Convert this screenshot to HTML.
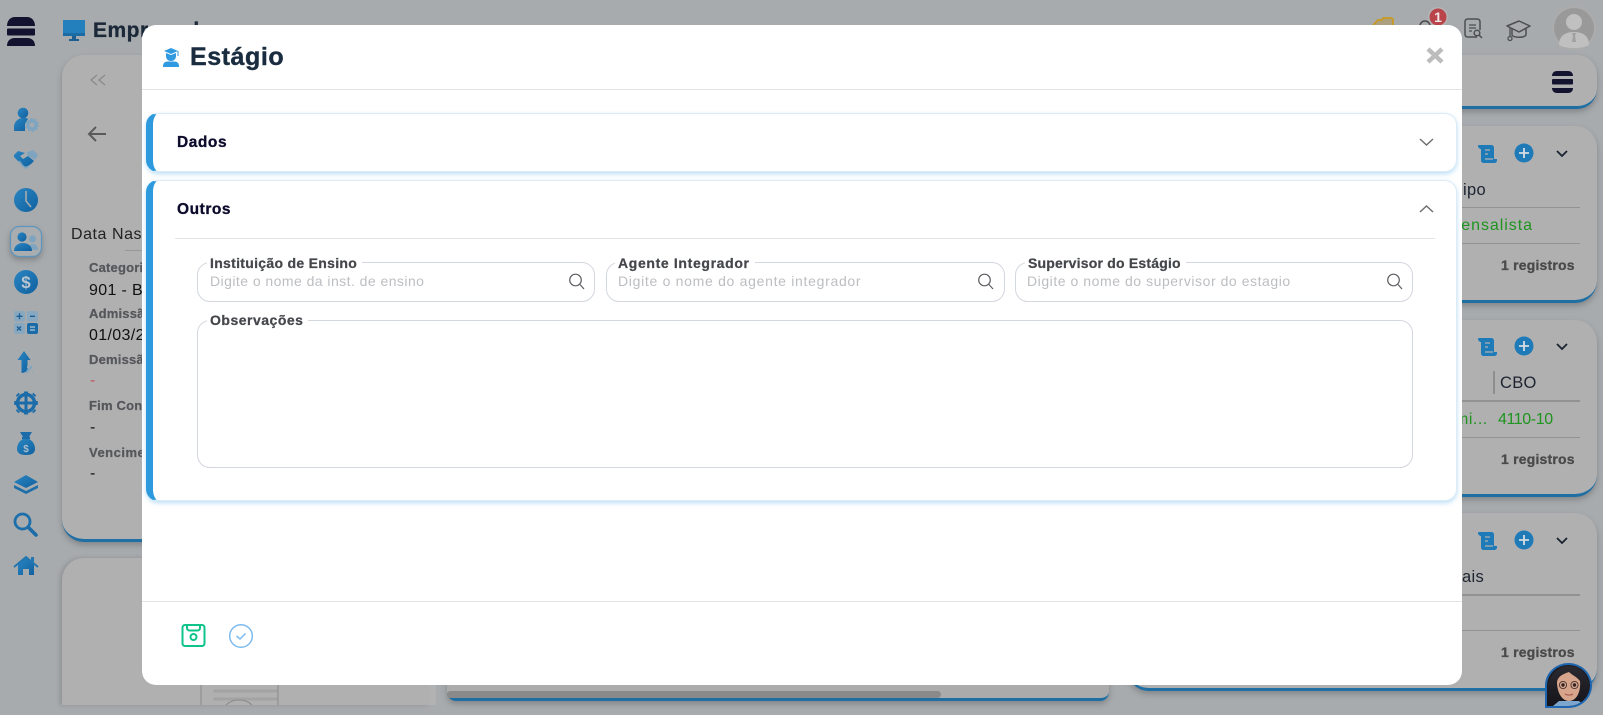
<!DOCTYPE html>
<html lang="pt-BR">
<head>
<meta charset="utf-8">
<title>Estágio</title>
<style>
*{box-sizing:border-box;margin:0;padding:0}
html,body{width:1603px;height:715px;overflow:hidden;background:#a7abae;font-family:"Liberation Sans",sans-serif}
.abs,.t{position:absolute}
.t{white-space:nowrap;line-height:1}
.card{position:absolute;background:#b0b0b0;border-radius:22px;box-shadow:0 3px 6px rgba(70,70,70,.35)}
.blue{border-bottom:3px solid #1f6fa5}
.lab{font-size:13px;font-weight:bold;color:#55575b;letter-spacing:.2px;-webkit-text-stroke:.25px #55575b}
.val{font-size:16px;color:#111;letter-spacing:.35px}
.reg{font-size:14px;font-weight:bold;color:#4a4a4a;letter-spacing:.2px;-webkit-text-stroke:.3px #4a4a4a}
.hd{font-size:16.5px;color:#1d2430;letter-spacing:.3px}
.gr{font-size:16px;color:#1f941f;letter-spacing:.5px}
.ln{position:absolute;height:1px;background:#929292}
svg{position:absolute;left:0;top:0;overflow:visible}
#modal{position:absolute;left:142px;top:25px;width:1320px;height:660px;background:#fff;border-radius:14px;overflow:hidden}
.acc{position:absolute;left:4px;width:1311px;background:#fff;border:1px solid #dcecf7;border-left:7px solid #2e9ade;border-radius:12px;box-shadow:0 2px 5px rgba(60,160,230,.35)}
.acc b{position:absolute;left:24px;font-size:15.5px;color:#0d0b2b;letter-spacing:.55px;line-height:1;-webkit-text-stroke:.3px #0d0b2b}
.fld{position:absolute;border:1px solid #d3d7de;border-radius:13px;background:#fff}
.fl{position:absolute;background:#fff;padding:0 5px 0 3px;font-size:14px;font-weight:bold;color:#45474b;line-height:1;white-space:nowrap;letter-spacing:.3px;-webkit-text-stroke:.25px #45474b}
.ph{position:absolute;font-size:14px;color:#bcbec2;line-height:1;white-space:nowrap;letter-spacing:.45px}
</style>
</head>
<body>

<!-- Page behind overlay -->
<div class="card blue" style="left:62px;top:55px;width:500px;height:487px"></div>
<div class="card" style="left:62px;top:558px;width:368px;height:147px;border-radius:22px 0 0 0;box-shadow:-2px 0 4px rgba(70,70,70,.25)"></div>
<div class="abs" style="left:430px;top:685px;width:6px;height:20px;background:#b2b2b2"></div>
<div class="card" style="left:447px;top:600px;width:662px;height:101px;background:#ababab;border-bottom:3px solid #1f6fa5;border-radius:0 0 9px 9px"></div>
<div class="abs" style="left:447px;top:691px;width:494px;height:7px;background:#8a8a8a;border-radius:4px"></div>
<div class="card blue" style="left:1400px;top:55px;width:197px;height:54px;border-radius:0 20px 20px 0"></div>
<div class="card blue" style="left:1400px;top:126px;width:197px;height:177px"></div>
<div class="card blue" style="left:1400px;top:320px;width:197px;height:177px"></div>
<div class="card blue" style="left:1127px;top:513px;width:470px;height:178px"></div>

<!-- header text -->
<div class="t" style="left:93px;top:20px;font-size:21px;font-weight:bold;color:#1b2838;letter-spacing:.5px;-webkit-text-stroke:.3px #1b2838">Empregados</div>

<!-- left card contents -->
<div class="t" style="left:71px;top:227px;font-size:16px;color:#222;letter-spacing:.55px">Data Nascimento</div>
<div class="ln" style="left:125px;top:250px;width:30px;background:#979797"></div>
<div class="t lab" style="left:89px;top:261px">Categoria</div>
<div class="t val" style="left:89px;top:283px">901 - Bolsista</div>
<div class="t lab" style="left:89px;top:307px">Admissão</div>
<div class="t val" style="left:89px;top:328px">01/03/2024</div>
<div class="t lab" style="left:89px;top:353px">Demissão</div>
<div class="t val" style="left:90px;top:373px;color:#c0535c">-</div>
<div class="t lab" style="left:89px;top:399px">Fim Contrato</div>
<div class="t val" style="left:90px;top:420px">-</div>
<div class="t lab" style="left:89px;top:446px;letter-spacing:.5px">Vencimento</div>
<div class="t val" style="left:90px;top:466px">-</div>

<!-- right cards contents -->
<div class="t hd" style="left:1463px;top:182px">ipo</div>
<div class="ln" style="left:1462px;top:207px;width:118px"></div>
<div class="t gr" style="left:1447px;top:218px;letter-spacing:.95px">Mensalista</div>
<div class="ln" style="left:1462px;top:243px;width:118px"></div>
<div class="t reg" style="left:1501px;top:258px">1 registros</div>

<div class="abs" style="left:1493px;top:371px;width:2px;height:23px;background:#8e8e8e"></div>
<div class="t hd" style="left:1500px;top:375px">CBO</div>
<div class="ln" style="left:1462px;top:400px;width:118px;height:2px"></div>
<div class="t gr" style="left:1455px;top:412px">mi...</div>
<div class="t gr" style="left:1498px;top:412px;letter-spacing:-.4px">4110-10</div>
<div class="ln" style="left:1462px;top:437px;width:118px"></div>
<div class="t reg" style="left:1501px;top:452px">1 registros</div>

<div class="t hd" style="left:1462px;top:569px">ais</div>
<div class="ln" style="left:1462px;top:594px;width:118px;height:2px"></div>
<div class="ln" style="left:1462px;top:630px;width:118px"></div>
<div class="t reg" style="left:1501px;top:645px">1 registros</div>

<!-- background icons -->
<svg width="1603" height="715" viewBox="0 0 1603 715">
<defs>
<linearGradient id="g" x1="0" y1="0" x2="1" y2="1"><stop offset="0" stop-color="#2a86c2"/><stop offset="1" stop-color="#10609f"/></linearGradient>
<linearGradient id="hair" x1="0" y1="0" x2="0" y2="1"><stop offset="0" stop-color="#2b2a30"/><stop offset="1" stop-color="#15141a"/></linearGradient>
</defs>

<!-- hamburger -->
<g fill="#13122f">
<path d="M7 26c0-5 3-9 8-9h12c5 0 8 4 8 9z"/>
<rect x="7" y="28.500" width="28" height="7" rx="1"/>
<path d="M7 46c0-5 3-8 8-8h12c5 0 8 3 8 8z"/>
<path d="M1552 76c0-3 2-5 5-5h11c3 0 5 2 5 5z"/>
<rect x="1552" y="79" width="21" height="5.500" rx="1"/>
<path d="M1552 88h21c0 3-2 5-5 5h-11c-3 0-5-2-5-5z"/>
</g>

<!-- monitor -->
<rect x="63" y="20" width="22" height="15" fill="#2380bd"/>
<rect x="63" y="33" width="22" height="3" fill="#1b6ca5"/>
<path d="M72 36h4v3h3v2H69v-2h3z" fill="#1b5f92"/>

<!-- left card: chevrons + back -->
<path d="M97 75l-6 5 6 5M105 75l-6 5 6 5" fill="none" stroke="#8a8a8a" stroke-width="1.300"/>
<path d="M106 134H89M96 127l-7 7 7 7" fill="none" stroke="#5a5a5a" stroke-width="2"/>

<!-- sidebar icons -->
<circle cx="23" cy="113" r="5.300" fill="url(#g)"/>
<path d="M14 131v-4c0-5 4-9 9-9h3c1 0 2 1 2 1l-3 5v7z" fill="url(#g)"/>
<circle cx="32" cy="125" r="4" fill="none" stroke="#7ea4c0" stroke-width="3.500"/>
<circle cx="32" cy="125" r="6.300" fill="none" stroke="#7ea4c0" stroke-width="1.500" stroke-dasharray="2 2"/>

<path d="M14 155l4-4 7 2-5 3 3 3 5-3 6 5-3 3-3 2-4 1-10-10z" fill="url(#g)"/>
<path d="M27 152l6-2 5 5-3 5-8-5z" fill="#7ea4c0"/>
<path d="M19 161l4 5 3 2 3-2" fill="none" stroke="#7ea4c0" stroke-width="1.600"/>

<circle cx="26" cy="200" r="12" fill="url(#g)"/>
<path d="M26 191v10l5 6" fill="none" stroke="#a7abae" stroke-width="1.600"/>

<rect x="10.500" y="226.500" width="31" height="30" rx="9" fill="#a9adb0" stroke="#5d95bf" stroke-width="1.200" style="filter:drop-shadow(0 3px 3px rgba(60,60,60,.35))"/>
<circle cx="32.500" cy="239" r="3.600" fill="#7ea4c0"/>
<path d="M28 250c0-4 2-6 5-6s5 3 5 6z" fill="#7ea4c0"/>
<circle cx="22" cy="237" r="4.600" fill="url(#g)"/>
<path d="M14 251c0-5 4-8 9-8s9 3 9 8z" fill="url(#g)"/>

<circle cx="26" cy="282" r="12" fill="url(#g)"/>
<text x="26" y="288" font-family="Liberation Sans" font-size="17" font-weight="bold" text-anchor="middle" fill="#b9c5ce">$</text>

<rect x="14" y="311" width="11" height="10.500" rx="2" fill="#88a8c0"/>
<rect x="27" y="311" width="11" height="10.500" rx="2" fill="#88a8c0"/>
<rect x="14" y="323" width="11" height="11" rx="2" fill="#88a8c0"/>
<rect x="27" y="323" width="11" height="11" rx="2" fill="#1a6ca9"/>
<path d="M16.500 316.300h6M19.500 313.300v6M30 316.300h5M17 326.500l4 4M21 326.500l-4 4" stroke="#1a5f95" stroke-width="1.300" fill="none"/>
<path d="M30 327h5M30 330h5" stroke="#b8c8d4" stroke-width="1.300"/>

<path d="M24 351l-6.500 9h4v13c3 0 5-1.500 6-4v-9h3z" fill="url(#g)"/>
<path d="M26 373l6-7M27 367h.5M32 372h.5" stroke="#7ea4c0" stroke-width="2" fill="none"/>

<g fill="none" stroke="#1b6ca8">
<circle cx="26" cy="403" r="8.500" stroke-width="3.400"/>
<path d="M17 403h18M26 394v18" stroke-width="3"/>
<path d="M26 393v-1.500M26 414.500v-1.500M16 403h-1.800M37.800 403h-1.800M18.500 395.500l-1.300-1.300M33.500 395.500l1.300-1.300M18.500 410.500l-1.300 1.300M33.500 410.500l1.300 1.300" stroke-width="4"/>
</g>

<path d="M20 432h12l-3 5h-6z" fill="#1b6ca8"/>
<rect x="22" y="437" width="8" height="2" fill="#1b6ca8"/>
<path d="M23 439h6c4 2 6 6 6 10 0 4-3 6-9 6s-9-2-9-6c0-4 2-8 6-10z" fill="url(#g)"/>
<text x="26" y="452" font-family="Liberation Sans" font-size="10" font-weight="bold" text-anchor="middle" fill="#a9bdcc">$</text>

<path d="M26 475l12 7-12 6-12-6z" fill="url(#g)"/>
<path d="M14 485l12 6 12-6v3l-12 6-12-6z" fill="#1d6ea9"/>

<circle cx="22.500" cy="521.500" r="7.500" fill="none" stroke="#1d6fab" stroke-width="2.800"/>
<path d="M29 528l7 7" stroke="#1b6ca8" stroke-width="3.600" stroke-linecap="round"/>

<path d="M18 564l8-6 8 6v11h-5v-6h-6v6h-5z" fill="url(#g)"/>
<path d="M14 567l12-10 12 10" fill="none" stroke="#2376af" stroke-width="2"/>
<rect x="31" y="557" width="3" height="5" fill="#2376af"/>

<!-- top right -->
<path d="M1373 25l5-5h4l1-2h8c1 0 2 1 2 2v5" fill="#aca07e" stroke="#c8991f" stroke-width="1.700"/>
<path d="M1420 25c1-3 3-4 5-4s4 1 5 4" fill="none" stroke="#4a4a4a" stroke-width="1.500"/>
<circle cx="1438" cy="17" r="10" fill="#b5b5b5"/>
<circle cx="1438" cy="17" r="8.500" fill="#b9444a"/>
<text x="1438" y="22" font-family="Liberation Sans" font-size="14" font-weight="bold" text-anchor="middle" fill="#f1e6e6">1</text>
<path d="M1477 37h-9c-2 0-3-1-3-3V22c0-2 1-3 3-3h9c2 0 3 1 3 3v8" fill="none" stroke="#4d4f52" stroke-width="1.500"/>
<path d="M1469 25h7M1469 28h7M1469 31h3" stroke="#4d4f52" stroke-width="1.300"/>
<circle cx="1477" cy="33" r="2.800" fill="none" stroke="#4d4f52" stroke-width="1.500"/>
<path d="M1479 35l3 3" stroke="#4d4f52" stroke-width="1.500"/>
<path d="M1519 21l-12 5 12 6 11-6z" fill="none" stroke="#4d4f52" stroke-width="1.500" stroke-linejoin="round"/>
<path d="M1512 29v6c2 3 12 3 14 0v-7" fill="none" stroke="#4d4f52" stroke-width="1.500"/>
<path d="M1510 28v9" stroke="#4d4f52" stroke-width="1.300"/>
<circle cx="1510" cy="38.500" r="2" fill="none" stroke="#4d4f52" stroke-width="1.300"/>
<circle cx="1574" cy="28" r="21" fill="#999" stroke="#acacac" stroke-width="2"/>
<circle cx="1574" cy="22" r="8" fill="#c0c0c0"/>
<path d="M1559 45c0-9 6-13 15-13s15 4 15 13c-4 2-9 3-15 3s-11-1-15-3z" fill="#c0c0c0"/>
<path d="M1572 33h4l-1 3 1 6h-4l1-6z" fill="#a0a0a0"/>

<!-- right card icons -->
<g id="row1">
<path d="M1479 145h12c2 0 3 1 3 3v11h3v1c0 2-1 3-3 3h-10c-2 0-3-1-3-3v-11h-1l-2-2c0-1 0-2 1-2z" fill="#1f7ab8"/>
<path d="M1485 150h5M1485 154h3M1485 159h8" stroke="#b0b0b0" stroke-width="1.300"/>
<circle cx="1524" cy="153" r="9.500" fill="#1f7ab8"/>
<path d="M1519 153h10M1524 148v10" stroke="#d6dde2" stroke-width="1.800"/>
<path d="M1557 151l5 5 5-5" fill="none" stroke="#1a2130" stroke-width="1.800"/>
</g>
<use href="#row1" y="193"/>
<use href="#row1" y="387"/>

<!-- document placeholder -->
<path d="M201 705v-20M278 705v-20" stroke="#8a8a8a" stroke-width="1"/>
<path d="M214 692h64M214 700h64" stroke="#a3a3a3" stroke-width="3" transform="translate(-.5 -1)"/>
<path d="M226 705c4-4 8-5 13-5s9 1 13 5" fill="none" stroke="#8a8a8a"/>
</svg>

<!-- Modal -->
<div id="modal">
  <div class="t" style="left:48px;top:20px;font-size:25px;font-weight:bold;color:#1a2c3f;letter-spacing:.55px;-webkit-text-stroke:.4px #1a2c3f">Estágio</div>
  <div class="abs" style="left:0;top:64px;width:100%;height:1px;background:#e2e4e6"></div>

  <div class="acc" style="top:88px;height:59px"><b style="top:21px">Dados</b></div>
  <div class="acc" style="top:155px;height:321px"><b style="top:21px">Outros</b>
    <div class="abs" style="left:22px;top:57px;width:1260px;height:1px;background:#e2e5e8"></div>
  </div>

  <div class="fld" style="left:55px;top:237px;width:398px;height:40px"></div>
  <div class="fl" style="left:65px;top:231px">Instituição de Ensino</div>
  <div class="ph" style="left:68px;top:249px">Digite o nome da inst. de ensino</div>

  <div class="fld" style="left:464px;top:237px;width:399px;height:40px"></div>
  <div class="fl" style="left:473px;top:231px;letter-spacing:.65px">Agente Integrador</div>
  <div class="ph" style="left:476px;top:249px;letter-spacing:.7px">Digite o nome do agente integrador</div>

  <div class="fld" style="left:873px;top:237px;width:398px;height:40px"></div>
  <div class="fl" style="left:883px;top:231px;letter-spacing:.2px">Supervisor do Estágio</div>
  <div class="ph" style="left:885px;top:249px;letter-spacing:.55px">Digite o nome do supervisor do estagio</div>

  <div class="fld" style="left:55px;top:295px;width:1216px;height:148px"></div>
  <div class="fl" style="left:65px;top:288px;letter-spacing:.5px">Observações</div>

  <div class="abs" style="left:0;top:576px;width:100%;height:1px;background:#e2e4e6"></div>

  <svg width="1320" height="660" viewBox="142 25 1320 660">
    <!-- title icon -->
    <path d="M171 48l-7 3 7 3 7-3z" fill="#2f9ae0"/>
    <path d="M166 53v3c0 3 2 5 5 5s5-2 5-5v-3l-5 2z" fill="#2f9ae0"/>
    <path d="M178 51v5" stroke="#2f9ae0" stroke-width="1"/>
    <path d="M163 67v-1c0-3 2-4.500 5-4.500h6c3 0 5 1.500 5 4.500v1z" fill="#2f9ae0"/>
    <!-- close -->
    <path d="M1428 49l14 13M1442 49l-14 13" stroke="#bcbcbc" stroke-width="4.500"/>
    <!-- chevrons -->
    <path d="M1420 139l6.500 6 6.500-6" fill="none" stroke="#707070" stroke-width="1.500"/>
    <path d="M1420 212l6.500-6 6.500 6" fill="none" stroke="#707070" stroke-width="1.500"/>
    <!-- search icons -->
    <g id="sr" fill="none" stroke="#5c5e62" stroke-width="1.200">
      <circle cx="575.500" cy="280" r="5.800"/><path d="M580 284.500l4 4.500"/>
    </g>
    <use href="#sr" x="409"/>
    <use href="#sr" x="818"/>
    <!-- floppy -->
    <path d="M185 625h17c1.500 0 2.500 1 2.500 2.500v16c0 1.500-1 2.500-2.500 2.500h-17c-1.500 0-2.500-1-2.500-2.500v-16c0-1.500 1-2.500 2.500-2.500z" fill="none" stroke="#0fc48b" stroke-width="2"/>
    <path d="M187 625v3c0 1.500 1 2.500 2.500 2.500h8c1.500 0 2.500-1 2.500-2.500v-3" fill="none" stroke="#0fc48b" stroke-width="2"/>
    <circle cx="193.500" cy="637" r="3" fill="none" stroke="#0fc48b" stroke-width="2"/>
    <!-- check -->
    <circle cx="241" cy="636" r="11.300" fill="none" stroke="#7dbbee" stroke-width="1.500"/>
    <path d="M236.500 636l3.500 3 5.500-5.500" fill="none" stroke="#7dbbee" stroke-width="1.500"/>
  </svg>
</div>

<!-- assistant avatar -->
<div class="abs" style="left:1545px;top:663px;width:47px;height:45px;border:2px solid #1f66b0;border-radius:50% 50% 50% 0;overflow:hidden;background:#1c1b20">
  <svg width="43" height="41" viewBox="0 0 43 41">
    <path d="M0 41C-2 18 5 1 22 1s23 17 21 40z" fill="url(#hair)"/>
    <path d="M12 36h20l6 5H6z" fill="#7da6cf"/>
    <path d="M10 17c1-6 6-8 12-10 3 3 8 5 11 9 1 10-3 20-11 20S10 26 10 17z" fill="#d7a58c"/>
    <circle cx="16" cy="20" r="3.600" fill="#cfa592" stroke="#4d322c" stroke-width=".9"/>
    <circle cx="27.500" cy="20" r="3.600" fill="#cfa592" stroke="#4d322c" stroke-width=".9"/>
    <circle cx="16" cy="20" r="1.700" fill="#33211c"/>
    <circle cx="27.500" cy="20" r="1.700" fill="#33211c"/>
    <path d="M18 29c2 1.500 6 1.500 8 0" fill="none" stroke="#a6524d" stroke-width="1.100"/>
  </svg>
</div>

</body>
</html>
